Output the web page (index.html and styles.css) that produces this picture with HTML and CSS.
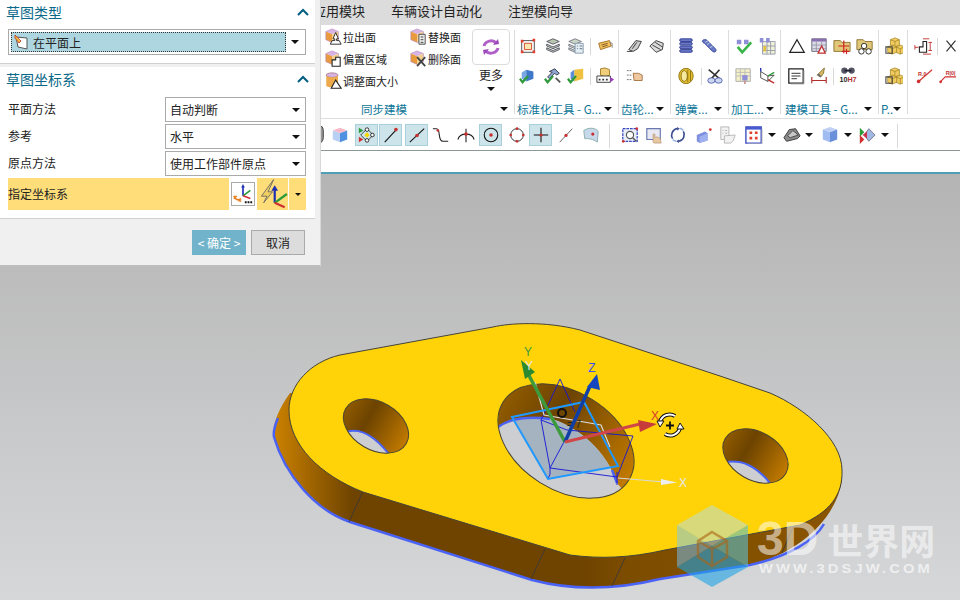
FILE: index.html
```html
<!DOCTYPE html>
<html lang="zh">
<head>
<meta charset="utf-8">
<title>草图</title>
<link rel="stylesheet" href="styles.css">
</head>
<body>
<svg class="defs" aria-hidden="true">
<defs>
<g id="cube"><path d="M9 1l7 3-7 3-7-3z" fill="#d8b4e4"/><path d="M2 4l7 3v9l-7-3z" fill="#e89a3c"/><path d="M9 7l7-3v9l-7 3z" fill="#f2cf8e"/><path d="M9 1l7 3v9l-7 3-7-3V4z" fill="none" stroke="#b78ac0" stroke-width=".7"/></g>
<symbol id="s1" viewBox="0 0 20 20"><use href="#cube"/><path d="M13 5l3 7h-2v2h3l2 4H7l2-4h3v-2h-2z" fill="#fff" stroke="#222" stroke-width="1"/></symbol>
<symbol id="s2" viewBox="0 0 20 20"><use href="#cube"/><path d="M9 11h4V8h5v10H9z" fill="#fff" stroke="#222" stroke-width="1.200"/></symbol>
<symbol id="s3" viewBox="0 0 20 20"><ellipse cx="9" cy="3.500" rx="6.500" ry="2.500" fill="#d8b4e4" stroke="#a78"/><path d="M2.500 3.500v12c1 2 12 2 13 0v-12c-1 3-12 3-13 0z" fill="#eda94a"/><path d="M13 9l6 9H8z" fill="#fff" stroke="#222" stroke-width="1.200"/></symbol>
<symbol id="s4" viewBox="0 0 20 20"><use href="#cube"/><path d="M11 7h7v11h-7z" fill="#eee" stroke="#444"/><path d="M13 10h3M13 13h3M13 16h3" stroke="#333"/></symbol>
<symbol id="s5" viewBox="0 0 20 20"><use href="#cube"/><path d="M9 8l9 10M18 8L9 18" stroke="#444" stroke-width="2"/></symbol>
<symbol id="swirl" viewBox="0 0 20 20"><path d="M3 9c1-5 9-7 12-3M17 11c-1 5-9 7-12 3" fill="none" stroke="#b060c8" stroke-width="3"/><path d="M12 8l6-1-1-5zM8 12l-6 1 1 5z" fill="#9a48b8"/></symbol>
<symbol id="a1" viewBox="0 0 20 20"><path d="M3 4h14v13H3z" fill="none" stroke="#444"/><path d="M6 7h8v7H6z" fill="#fbe8b0" stroke="#d04020"/><path d="M2 3h3v3H2zM15 2h3v3h-3zM2 15h3v3H2zM15 15h3v3h-3z" fill="#e04030"/></symbol>
<symbol id="a2" viewBox="0 0 20 20"><g fill="#b9c7b0" stroke="#556"><path d="M10 2l7 3-7 3-7-3z"/><path d="M3 8l7 3 7-3v2l-7 3-7-3z"/><path d="M3 12l7 3 7-3v2l-7 3-7-3z"/></g></symbol>
<symbol id="a3" viewBox="0 0 20 20"><g fill="#c9d6c5" stroke="#778"><path d="M9 2l7 3-7 3-7-3z"/><path d="M2 8l7 3 7-3v2l-7 3-7-3z"/><path d="M2 12l7 3 7-3v2l-7 3-7-3z"/></g><path d="M9 7h9v11H9z" fill="#e4eef5" stroke="#89a"/><path d="M11 10h1M14 10h3M11 13h1M14 13h3" stroke="#567"/></symbol>
<symbol id="a4" viewBox="0 0 20 20"><path d="M3 7l12-3 2 6-12 4z" fill="#f2c25c" stroke="#a06a20"/><path d="M6 9l7-2M7 11l6-2" stroke="#7a5020"/><path d="M15 6l3 1v5" fill="none" stroke="#888"/></symbol>
<g id="chk"><path d="M1 13l3 4 6-7" fill="none" stroke="#2f9a3a" stroke-width="2.500"/></g>
<symbol id="b1" viewBox="0 0 20 20"><path d="M8 3l8 2v8l-8 3z" fill="#3f78c8"/><path d="M8 3L3 6v7l5 3z" fill="#7aa8e0"/><use href="#chk"/></symbol>
<symbol id="b2" viewBox="0 0 20 20"><path d="M6 5l6-3 5 5-3 2-2-2-6 6-2-2 5-5z" fill="#8fa4d0" stroke="#334"/><use href="#chk"/><path d="M13 12l5 5" stroke="#555" stroke-width="2"/></symbol>
<symbol id="b3" viewBox="0 0 20 20"><path d="M8 3l10-1v11l-10 3z" fill="#f0c040"/><path d="M8 3L4 6v7l4 3z" fill="#5d8fd8"/><use href="#chk"/></symbol>
<symbol id="b4" viewBox="0 0 20 20"><path d="M5 2l5-1 5 2v6l-5 2-5-2z" fill="#efcf7c" stroke="#a07a20"/><path d="M1 10h15v7H1z" fill="#fff" stroke="#333"/><path d="M3 13h2v2H3zM7 13h2v2H7zM11 13h2v2h-2z" fill="#333"/><path d="M16 11l4 3-4 3z" fill="#a03ac0"/></symbol>
<symbol id="c1" viewBox="0 0 20 20"><path d="M3 14L11 4l6 1-4 8-5 3z" fill="#ccc" stroke="#333"/><path d="M7 13l5-7M1 16h6" stroke="#333"/></symbol>
<symbol id="c2" viewBox="0 0 20 20"><path d="M2 10l7-6 8 3-1 7-7 3z" fill="#dcdcdc" stroke="#333"/><path d="M5 9l9 5M8 6l8 5" stroke="#333"/></symbol>
<symbol id="c3" viewBox="0 0 20 20"><path d="M1 4h6M1 9h6M1 14h6" stroke="#666" stroke-dasharray="2 1"/><path d="M8 7h6l4 2v6h-9z" fill="#f0c8a0" stroke="#a07040"/></symbol>
<symbol id="d1" viewBox="0 0 20 20"><g fill="#6a78c8" stroke="#303c90"><rect x="3" y="2" width="14" height="3" rx="1.500"/><rect x="3" y="6" width="14" height="3" rx="1.500"/><rect x="3" y="10" width="14" height="3" rx="1.500"/><rect x="3" y="14" width="14" height="3" rx="1.500"/></g></symbol>
<symbol id="d2" viewBox="0 0 20 20"><path d="M5 3c-3 0-3 3 0 4l9 9c3 2 5-1 3-3L7 3z" fill="#6a78c8" stroke="#303c90"/><path d="M6 6l3-2M8 9l3-3M11 12l3-2" stroke="#cdd"/></symbol>
<symbol id="d3" viewBox="0 0 20 20"><ellipse cx="10" cy="10" rx="8" ry="8.500" fill="#e6c030" stroke="#8a7010"/><ellipse cx="8" cy="10" rx="3.500" ry="6" fill="#f7e8a0" stroke="#8a7010"/><path d="M12 3v14M15 4v12" stroke="#8a7010"/></symbol>
<symbol id="d4" viewBox="0 0 20 20"><path d="M3 3l12 10M15 3L5 14" stroke="#333" stroke-width="1.800"/><ellipse cx="6" cy="15" rx="4" ry="3" fill="#cfd6f0" stroke="#5060b0"/><ellipse cx="14" cy="15" rx="4" ry="3" fill="#cfd6f0" stroke="#5060b0"/></symbol>
<symbol id="e1" viewBox="0 0 20 20"><path d="M2 3h5v5H2zM10 3h5v5h-5z" fill="#8f8fd8"/><path d="M3 11l5 6 10-11" fill="none" stroke="#39b54a" stroke-width="3"/></symbol>
<symbol id="e2" viewBox="0 0 20 20"><path d="M5 5h14v14H5z" fill="#eef2d8" stroke="#99a"/><path d="M5 10h14M5 15h14M10 5v14M14 5v14" stroke="#99a"/><path d="M2 1h4v5H2zM9 1h4v5H9z" fill="#8f8fd8"/><path d="M6 10h3v6H6z" fill="#e0c040"/></symbol>
<symbol id="e3" viewBox="0 0 20 20"><path d="M1 2h16v14H1z" fill="#f4f0c8" stroke="#aaa"/><path d="M1 6h16M1 10h16M6 2v14M11 2v14" stroke="#bbb"/><path d="M8 9h6v6H8z" fill="#8f8fd8"/><path d="M11 15v4" stroke="#c99" stroke-width="2"/></symbol>
<symbol id="e4" viewBox="0 0 20 20"><path d="M3 5l8 5v6l-8-4zM11 10l7-1-7 7" fill="#fff" stroke="#444"/><path d="M3 5V1" stroke="#2030b0" stroke-width="1.500"/><path d="M11 10l7-4" stroke="#2a9a3a" stroke-width="1.500"/><path d="M11 14l7 4" stroke="#c03030" stroke-width="1.500"/></symbol>
<symbol id="f1" viewBox="0 0 20 20"><path d="M10 3l8 14H2z" fill="none" stroke="#222" stroke-width="1.400"/></symbol>
<symbol id="f2" viewBox="0 0 20 20"><path d="M2 2h16v14H2z" fill="#dcdce8" stroke="#667"/><path d="M2 2h16v3H2z" fill="#8a6fb0"/><path d="M2 9h16M2 13h16M7 5v11M13 5v11" stroke="#99a"/><path d="M13 10l4 8H9z" fill="#fff" stroke="#c03030" stroke-width="1.400"/></symbol>
<symbol id="f3" viewBox="0 0 20 20"><path d="M1 4h7l2 2h9v10H1z" fill="#e0c878" stroke="#8a7030"/><path d="M12 4v14M6 10h12M15 13v6M10 16h8" stroke="#d02020" stroke-width="1.300"/></symbol>
<symbol id="f4" viewBox="0 0 20 20"><path d="M1 3h7l2 2h8v9H1z" fill="#e0c878" stroke="#8a7030"/><circle cx="9" cy="10" r="3" fill="#fff" stroke="#222"/><circle cx="6" cy="16" r="3" fill="#fff" stroke="#222"/><circle cx="14" cy="16" r="3" fill="#fff" stroke="#222"/></symbol>
<symbol id="f5" viewBox="0 0 20 20"><path d="M2 2h16v16H2z" fill="#fff" stroke="#222" stroke-width="1.400"/><path d="M5 7h10M5 10h10M5 13h6" stroke="#222"/><path d="M19 4v15H4" fill="none" stroke="#bbb"/></symbol>
<symbol id="f6" viewBox="0 0 20 20"><path d="M2 11v7M18 11v7M2 15h16" stroke="#b03030" stroke-width="1.300"/><path d="M8 9l8-8-1 6-3 4z" fill="#d8b860" stroke="#807030"/><path d="M9 8l3 3" stroke="#667" stroke-width="2"/></symbol>
<symbol id="f7" viewBox="0 0 20 20"><circle cx="6" cy="4" r="3.500" fill="#556"/><circle cx="14" cy="4" r="3.500" fill="#556"/><path d="M6 4h8" stroke="#223" stroke-width="2"/><text x="10" y="17" class="t7">10<tspan class="t7r">H7</tspan></text></symbol>
<g id="box"><path d="M8 1l5 2v6l-5 2-5-2V3z" fill="#f0cc60" stroke="#a08020" stroke-width=".8"/><path d="M3 3l5 2 5-2M8 5v6" fill="none" stroke="#a08020" stroke-width=".8"/></g>
<symbol id="g1" viewBox="0 0 20 20"><use href="#box" x="3"/><use href="#box" x="9" y="8"/><use href="#box" x="0" y="8"/><path d="M1 11h7v7H1z" fill="none" stroke="#444" stroke-width="1.200"/></symbol>
<symbol id="h1" viewBox="0 0 20 20"><path d="M6 17V11h4V5h4v12z" fill="#fff" stroke="#222" stroke-width="1.200"/><path d="M1 9v5M1 11.500h4M10 2h7M10 19h9M18 6v9M16 6h4M16 15h4" stroke="#c03030"/></symbol>
<symbol id="h2" viewBox="0 0 20 20"><path d="M3 17L19 3" stroke="#d03030" stroke-width="1.300"/><circle cx="4" cy="16" r="2" fill="#d03030"/><text x="8" y="10" class="tr">R.0</text></symbol>
<symbol id="h3" viewBox="0 0 20 20"><path d="M2 17l6-6h12" fill="none" stroke="#d03030" stroke-width="1.200"/><circle cx="3" cy="16.500" r="1.500" fill="#d03030"/><text x="14" y="9" class="tr">R|0|</text></symbol>
<symbol id="x" viewBox="0 0 20 20"><path d="M5 4l10 12M15 4L5 16" stroke="#333" stroke-width="1.300"/></symbol>
<symbol id="t0" viewBox="0 0 20 20"><path d="M3 5a6 6 0 0 1 14 0v8a6 6 0 0 1-14 0z" fill="#999" stroke="#333"/></symbol>
<symbol id="t1" viewBox="0 0 20 20"><path d="M10 2l8 3-8 3-8-3z" fill="#f4b8c8"/><path d="M2 5l8 3v10l-8-3z" fill="#b8d0f4"/><path d="M10 8l8-3v10l-8 3z" fill="#5090e0"/></symbol>
<symbol id="t2" viewBox="0 0 20 20"><path d="M10 3l7 7-7 7-7-7z" fill="none" stroke="#333"/><path d="M10 7l3 3-3 3-3-3z" fill="#f7d700"/><circle cx="10" cy="4" r="2" fill="#fff" stroke="#222"/><circle cx="10" cy="16" r="2" fill="#fff" stroke="#222"/><circle cx="16" cy="10" r="2" fill="#fff" stroke="#222"/><path d="M1 2l5 3-5 3z" fill="#2a9a3a"/><path d="M1 12l5 3-5 3z" fill="#d03030"/></symbol>
<symbol id="t3" viewBox="0 0 20 20"><path d="M3 18L16 4" stroke="#111" stroke-width="1.200"/><circle cx="15.500" cy="4" r="2" fill="#c83030"/></symbol>
<symbol id="t4" viewBox="0 0 20 20"><path d="M2 18L18 3" stroke="#111" stroke-width="1.200"/><circle cx="10" cy="10.500" r="2" fill="#c83030"/></symbol>
<symbol id="t5" viewBox="0 0 20 20"><path d="M1 3h4c5 0 1 14 7 14h6" fill="none" stroke="#222" stroke-width="1.200"/><circle cx="6.500" cy="5" r="1.500" fill="#c83030"/></symbol>
<symbol id="t6" viewBox="0 0 20 20"><path d="M1 15c2-8 16-8 18 0M10 3v15" fill="none" stroke="#222" stroke-width="1.200"/><circle cx="10" cy="9" r="2" fill="#c83030"/></symbol>
<symbol id="t7" viewBox="0 0 20 20"><circle cx="10" cy="10" r="7.500" fill="none" stroke="#111" stroke-width="1.200"/><circle cx="10" cy="10" r="2" fill="#c83030"/></symbol>
<symbol id="t8" viewBox="0 0 20 20"><circle cx="10" cy="10" r="7" fill="none" stroke="#333" stroke-width="1.100"/><g fill="#c83030"><circle cx="10" cy="3" r="1.500"/><circle cx="10" cy="17" r="1.500"/><circle cx="3" cy="10" r="1.500"/><circle cx="17" cy="10" r="1.500"/></g></symbol>
<symbol id="t9" viewBox="0 0 20 20"><path d="M10 2v16M2 10h16" stroke="#111" stroke-width="1.200"/><circle cx="10" cy="10" r="1.800" fill="#c83030"/></symbol>
<symbol id="t10" viewBox="0 0 20 20"><path d="M3 18L17 3" stroke="#555" stroke-width="1"/><circle cx="10" cy="10.500" r="1.800" fill="#c83030"/></symbol>
<symbol id="t11" viewBox="0 0 20 20"><path d="M2 5c6-4 13-3 16 1l-1 12c-5-4-10-4-14-4z" fill="#c6d8ea" stroke="#8aa"/><circle cx="12" cy="9" r="1.800" fill="#c83030"/></symbol>
<symbol id="t12" viewBox="0 0 20 20"><path d="M2 3h16v14H2z" fill="#e9eef8" stroke="#3a4ac0" stroke-width="1.400" stroke-dasharray="3 1"/><circle cx="10" cy="10" r="4" fill="#fff" stroke="#555" stroke-width="1.300"/><path d="M13 13l4 4" stroke="#555" stroke-width="1.500"/><circle cx="2.500" cy="17" r="1.500" fill="#d03030"/><circle cx="17.500" cy="3" r="1.500" fill="#d03030"/></symbol>
<symbol id="t13" viewBox="0 0 20 20"><path d="M2 3h15v12H2z" fill="#e9e9f4" stroke="#6a7ab0" stroke-width="1.300"/><path d="M9 18V9h2v4l2-1 4 2 1 5H10z" fill="#e8c8a0" stroke="#b09070" stroke-width=".7"/></symbol>
<symbol id="t14" viewBox="0 0 20 20"><path d="M4 14A7.500 7.500 0 0 1 9 2.800M16 6a7.500 7.500 0 0 1-5 11" fill="none" stroke="#3a4a90" stroke-width="1.800"/><path d="M9 1l3 2-3 2zM11 15l-3 2 3 2z" fill="#3a4a90"/><path d="M16 5a8 8 0 0 0-4-2.500M4 15a8 8 0 0 0 4 2" stroke="#8fb0e0" fill="none" stroke-width="1.500"/></symbol>
<symbol id="t15" viewBox="0 0 20 20"><path d="M2 10l9-4 3 2v8l-9 3-3-2z" fill="#7f90e0"/><path d="M5 12l9-4v8l-9 3z" fill="#9fb0ef"/><circle cx="17" cy="4" r="1.500" fill="#d03030"/></symbol>
<symbol id="t16" viewBox="0 0 20 20"><g fill="#f2f2f2" stroke="#b4b4b4"><path d="M2 1h9v14H2z"/><path d="M6 11l12-1-2 6-3 3H6z"/></g><path d="M4 5h1M7 5h2M4 8h1M7 8h2" stroke="#aaa"/></symbol>
<symbol id="t17" viewBox="0 0 20 20"><path d="M1 1h17v18H1z" fill="#fff" stroke="#3a4ac0" stroke-width="1.500"/><path d="M1 1h17v3H1z" fill="#4a5ad0"/><path d="M5 6h3v3H5zM11 6h3v3h-3zM5 12h3v3H5zM11 12h3v3h-3z" fill="#e04030"/><path d="M19 3v17H3" fill="none" stroke="#bbb"/></symbol>
<symbol id="t18" viewBox="0 0 20 20"><path d="M1 13l6-9 7-1 5 8-3 3-12 3z" fill="#8a8a8a" stroke="#333"/><path d="M5 11l6-6 6 5-9 3z" fill="#c8c8c8" stroke="#444"/></symbol>
<symbol id="t19" viewBox="0 0 20 20"><path d="M10 1l8 3-8 3-8-3z" fill="#bfd0f4"/><path d="M2 4l8 3v11l-8-3z" fill="#a0bcf0"/><path d="M10 7l8-3v11l-8 3z" fill="#6a90dc"/></symbol>
<symbol id="t20" viewBox="0 0 20 20"><path d="M2 2l5 5-5 5z" fill="#2a9a3a"/><path d="M2 10l5 5-5 5z" fill="#d03030"/><path d="M12 3l7 7-7 7-5-7z" fill="#9fb8e6" stroke="#778"/><path d="M5 10l5-4v8z" fill="#d03050"/></symbol>
<symbol id="pln" viewBox="0 0 16 16"><path d="M2 3l11 1v11L4 13z" fill="#fff" stroke="#555"/><path d="M1 1l6 6-2 2-4-5z" fill="#f0c040" stroke="#c03020" stroke-width=".8"/></symbol>
<symbol id="cs" viewBox="0 0 24 24"><path d="M12 14V4" stroke="#1e30b0" stroke-width="1.800"/><path d="M12 14l8-6" stroke="#2a9a3a" stroke-width="1.800"/><path d="M12 14l8 3" stroke="#d03030" stroke-width="1.800"/><path d="M10 5l2-4 2 4z" fill="#1e30b0"/><path d="M2 14c2 5 5 5 8 3M2 17l3-3M7 19l3 1" fill="none" stroke="#e88020" stroke-width="1.800"/><path d="M14 20h2v2h-2zM17 20h2v2h-2zM20 20h2v2h-2z" fill="#111"/></symbol>
<symbol id="csz" viewBox="0 0 28 28"><path d="M15 1L4 16l5 0-3 6 8-10h-4z" fill="#f0d060" stroke="#666" stroke-width=".8"/><path d="M16 22V9" stroke="#1e30b0" stroke-width="2"/><path d="M13 11l3-5 3 5z" fill="#1e30b0"/><path d="M16 22l11-8" stroke="#2a9a3a" stroke-width="2"/><path d="M16 22l9 4" stroke="#d03030" stroke-width="2"/></symbol>
</defs>
</svg>

<div class="app">
  <nav class="menu">
    <span>应用模块</span><span>车辆设计自动化</span><span>注塑模向导</span>
  </nav>

  <section class="ribbon">
    <div class="grp g1">
      <div class="sync">
        <div class="scol c-a">
          <div class="item"><svg class="ic"><use href="#s1"/></svg>拉出面</div>
          <div class="item"><svg class="ic"><use href="#s2"/></svg>偏置区域</div>
          <div class="item"><svg class="ic"><use href="#s3"/></svg>调整面大小</div>
        </div>
        <div class="scol c-b">
          <div class="item"><svg class="ic"><use href="#s4"/></svg>替换面</div>
          <div class="item"><svg class="ic"><use href="#s5"/></svg>删除面</div>
        </div>
        <div class="more">
          <div class="morebtn"><svg class="ic"><use href="#swirl"/></svg></div>
          <span>更多</span>
          <i class="tri"></i>
        </div>
      </div>
      <div class="lab lab-center"><span>同步建模</span><i class="tri"></i></div>
    </div>

    <div class="grp g2">
      <div class="tools">
        <div class="row"><svg class="ic m3"><use href="#a1"/></svg><svg class="ic m5"><use href="#a2"/></svg><svg class="ic m3"><use href="#a3"/></svg><i class="sep m4"></i><svg class="ic m4"><use href="#a4"/></svg></div>
        <div class="row"><svg class="ic m3"><use href="#b1"/></svg><svg class="ic m5"><use href="#b2"/></svg><svg class="ic m3"><use href="#b3"/></svg><i class="sep m4"></i><svg class="ic m4"><use href="#b4"/></svg></div>
      </div>
      <div class="lab"><span>标准化工具 - G...</span><i class="tri"></i></div>
    </div>

    <div class="grp g3">
      <div class="tools">
        <div class="row"><svg class="ic m6"><use href="#c1"/></svg><svg class="ic m2"><use href="#c2"/></svg></div>
        <div class="row"><svg class="ic m6"><use href="#c3"/></svg></div>
      </div>
      <div class="lab"><span>齿轮...</span><i class="tri"></i></div>
    </div>

    <div class="grp g4">
      <div class="tools">
        <div class="row"><svg class="ic m5"><use href="#d1"/></svg><svg class="ic m3"><use href="#d2"/></svg></div>
        <div class="row"><svg class="ic m5"><use href="#d3"/></svg><i class="sep m5"></i><svg class="ic m3"><use href="#d4"/></svg></div>
      </div>
      <div class="lab lab-in"><span>弹簧...</span><i class="tri"></i></div>
    </div>

    <div class="grp g5">
      <div class="tools">
        <div class="row"><svg class="ic m5"><use href="#e1"/></svg><svg class="ic m3"><use href="#e2"/></svg></div>
        <div class="row"><svg class="ic m5"><use href="#e3"/></svg><svg class="ic m3"><use href="#e4"/></svg></div>
      </div>
      <div class="lab"><span>加工...</span><i class="tri"></i></div>
    </div>

    <div class="grp g6">
      <div class="tools">
        <div class="row"><svg class="ic m6"><use href="#f1"/></svg><svg class="ic m2"><use href="#f2"/></svg><svg class="ic m3"><use href="#f3"/></svg><svg class="ic m3"><use href="#f4"/></svg></div>
        <div class="row"><svg class="ic m5"><use href="#f5"/></svg><svg class="ic m3"><use href="#f6"/></svg><i class="sep m4"></i><svg class="ic m4"><use href="#f7"/></svg></div>
      </div>
      <div class="lab lab-in"><span>建模工具 - G...</span><i class="tri"></i></div>
    </div>

    <div class="grp g7">
      <div class="tools">
        <div class="row"><svg class="ic m5"><use href="#g1"/></svg></div>
        <div class="row"><svg class="ic m5"><use href="#g1"/></svg></div>
      </div>
      <div class="lab"><span>P..</span><i class="tri"></i></div>
    </div>

    <div class="grp g8">
      <div class="tools">
        <div class="row"><svg class="ic m5"><use href="#h1"/></svg><i class="sep m4"></i><svg class="ic m3"><use href="#x"/></svg></div>
        <div class="row"><svg class="ic m6"><use href="#h2"/></svg><svg class="ic m3"><use href="#h3"/></svg></div>
      </div>
    </div>
  </section>

  <section class="toolbar">
    <div class="t"><svg class="ic"><use href="#t0"/></svg></div>
    <div class="t"><svg class="ic"><use href="#t1"/></svg></div>
    <div class="t on m4"><svg class="ic"><use href="#t2"/></svg></div>
    <div class="t on m1"><svg class="ic"><use href="#t3"/></svg></div>
    <div class="t on m3"><svg class="ic"><use href="#t4"/></svg></div>
    <div class="t m1"><svg class="ic"><use href="#t5"/></svg></div>
    <div class="t m2"><svg class="ic"><use href="#t6"/></svg></div>
    <div class="t on m2"><svg class="ic"><use href="#t7"/></svg></div>
    <div class="t m3"><svg class="ic"><use href="#t8"/></svg></div>
    <div class="t on m1"><svg class="ic"><use href="#t9"/></svg></div>
    <div class="t m2"><svg class="ic"><use href="#t10"/></svg></div>
    <div class="t m2"><svg class="ic"><use href="#t11"/></svg></div>
    <i class="tsep m7"></i>
    <div class="t m8"><svg class="ic"><use href="#t12"/></svg></div>
    <div class="t m1"><svg class="ic"><use href="#t13"/></svg></div>
    <div class="t m1"><svg class="ic"><use href="#t14"/></svg></div>
    <div class="t m3"><svg class="ic"><use href="#t15"/></svg></div>
    <div class="t m1"><svg class="ic"><use href="#t16"/></svg></div>
    <div class="t m3"><svg class="ic"><use href="#t17"/></svg></div>
    <i class="tri tb m3"></i>
    <div class="t m4"><svg class="ic"><use href="#t18"/></svg></div>
    <i class="tri tb m2"></i>
    <div class="t m5"><svg class="ic"><use href="#t19"/></svg></div>
    <i class="tri tb m3"></i>
    <div class="t m3"><svg class="ic"><use href="#t20"/></svg></div>
    <i class="tri tb m3"></i>
    <i class="tsep m8"></i>
  </section>

  <div class="tabstrip"></div>

  <main class="viewport">
    <svg class="scene" viewBox="0 174 960 426">
      <defs>
        <linearGradient id="sideGrad" gradientUnits="userSpaceOnUse" x1="273" y1="0" x2="840" y2="0">
          <stop offset="0" stop-color="#cc8200"/><stop offset=".14" stop-color="#6f4400"/><stop offset=".55" stop-color="#6f4400"/><stop offset=".62" stop-color="#7c4c00"/><stop offset="1" stop-color="#8a5500"/>
        </linearGradient>
        <linearGradient id="wall" x1="0" y1="0" x2="1" y2="0">
          <stop offset="0" stop-color="#8f5a00"/><stop offset=".35" stop-color="#6c4300"/><stop offset="1" stop-color="#c27a00"/>
        </linearGradient>
        <clipPath id="h1clip"><ellipse cx="376" cy="426" rx="35" ry="24" transform="rotate(30 376 426)"/></clipPath>
        <clipPath id="h2clip"><ellipse cx="755.500" cy="456" rx="35" ry="24" transform="rotate(30 755.500 456)"/></clipPath>
        <clipPath id="h3clip"><ellipse cx="566" cy="441" rx="74" ry="49" transform="rotate(32 566 441)"/></clipPath>
        <clipPath id="floorclip"><path d="M498 427C510 418 535 415 552 419C580 428 607 452 617 483L640 500H490Z"/></clipPath>
      </defs>
      <path class="side" d="M290 393C278 410 272 425 274 437C285 475 315 510 350 522L532 580C570 590 615 590 660 579L750 565C790 556 835 525 842 480L700 400Z"/>
      <path class="edgeb" d="M278 418C275 425 273 431 274 437C285 475 315 510 350 522L532 580C570 590 615 590 660 579L750 565C790 556 815 540 824 524"/>
      <path class="facet" d="M363 491L349 522M545 549L531 579M625 558L612 586M793 527L782 553"/>
      <path class="top" d="M340 355L493 327C510 323 545 321 580 330L720 376L770 393C805 408 842 440 842 470C843 495 830 512 800 525L665 550C630 558 600 559 570 555L363 492C320 475 289 445 289 410C289 385 310 362 340 355Z"/>

      <ellipse class="holewall" cx="376" cy="426" rx="35" ry="24" transform="rotate(30 376 426)"/>
      <g clip-path="url(#h1clip)"><path class="floor fb" d="M346 432C358 428 372 433 388 453L360 470L330 450Z"/></g>
      <ellipse class="holerim" cx="376" cy="426" rx="35" ry="24" transform="rotate(30 376 426)"/>

      <ellipse class="holewall" cx="755.500" cy="456" rx="35" ry="24" transform="rotate(30 755.500 456)"/>
      <g clip-path="url(#h2clip)"><path class="floor fb" d="M726 462C742 460 755 465 770 483L745 495L715 475Z"/></g>
      <ellipse class="holerim" cx="755.500" cy="456" rx="35" ry="24" transform="rotate(30 755.500 456)"/>

      <ellipse class="holewall" cx="566" cy="441" rx="74" ry="49" transform="rotate(32 566 441)"/>
      <g clip-path="url(#h3clip)">
        <path class="floor" d="M498 427C510 418 535 415 552 419C580 428 607 452 617 483L640 510H480Z"/>
        <g clip-path="url(#floorclip)"><path class="tint" d="M512 417L584 402L618 466L548 479Z"/></g>
        <path class="fedge" d="M498 427C510 418 530 416 550 419"/>
        <path class="fedge" d="M612 470L617 483"/>
      </g>
      <ellipse class="holerim" cx="566" cy="441" rx="74" ry="49" transform="rotate(32 566 441)"/>

      <path class="thin" d="M560 379L541 420L550 468L617 477L633 436L567 430L541 420M560 379L575 412M580 412L550 468M550 468L550 474L548 479M617 472L617 485"/>
      <path class="whiteln" d="M535 382L544 415L601 425L610 447M618 478L664 482"/>
      <path class="whitetip" d="M661 479L677 482.500L661 485Z"/>
      <path class="plane" d="M512 417L584 402L618 466L548 479Z"/>
      <circle class="ring" cx="562" cy="413" r="4"/>
      <text x="567" y="428" class="dim">= 7</text>

      <path class="ay" d="M565 442L527 372"/>
      <path class="ayh" d="M521 360L535 372L525 379Z"/>
      <path class="az" d="M565 442L590 386"/>
      <path class="azh" d="M597 374L600 390L587 387Z"/>
      <path class="ax" d="M565 442L640 424"/>
      <path class="axh" d="M657 424L638 420L640 432Z"/>
      <text x="528" y="356" class="lbl ly">Y</text>
      <text x="529" y="370" class="lbl lw">Y</text>
      <text x="592" y="372" class="lbl lz">Z</text>
      <text x="655" y="420" class="lbl lx">X</text>
      <text x="683" y="487" class="lbl lw">X</text>

      <g class="rot">
        <path class="rotb" d="M660 422A10 10 0 0 1 675 416M680 428A10 10 0 0 1 665 434"/>
        <path class="rotw" d="M660 422A10 10 0 0 1 675 416M680 428A10 10 0 0 1 665 434"/>
        <path class="rotf" d="M657 421L664 421L660 427ZM677 429L684 429L680 423Z"/>
        <path class="plus" d="M666 425.500H674M670 421.500V429.500"/>
      </g>

      <g class="wm">
        <path class="wm-top" d="M712 505L748 525L712 546L677 525Z"/>
        <path class="wm-right" d="M748 525V567L712 546Z"/>
        <path class="wm-left" d="M677 525L712 546L677 567Z"/>
        <path class="wm-bottom" d="M677 567L712 546L748 567L712 587Z"/>
        <path class="wm-cube" d="M712 532L727 541V557L712 566L698 557V541ZM698 541L712 549L727 541M712 549V566"/>
        <text x="757" y="555" class="wm-t1"><tspan class="wm-en">3D</tspan><tspan dx="9">世界网</tspan></text>
        <text x="759" y="573" class="wm-t2" textLength="174" lengthAdjust="spacingAndGlyphs">WWW.3DSJW.COM</text>
      </g>
    </svg>
  </main>

  <aside class="dialog">
    <div class="sec s-type">
      <div class="sec-head"><span>草图类型</span><svg class="chev" viewBox="0 0 12 8"><path d="M1 7l5-5 5 5"/></svg></div>
      <div class="sel sel-type">
        <div class="sel-val"><svg class="pln"><use href="#pln"/></svg>在平面上</div>
        <i class="tri"></i>
      </div>
    </div>
    <div class="sec s-csys">
      <div class="sec-head"><span>草图坐标系</span><svg class="chev" viewBox="0 0 12 8"><path d="M1 7l5-5 5 5"/></svg></div>
      <div class="form">
        <div class="frow"><label>平面方法</label><div class="sel"><span>自动判断</span><i class="tri"></i></div></div>
        <div class="frow"><label>参考</label><div class="sel"><span>水平</span><i class="tri"></i></div></div>
        <div class="frow"><label>原点方法</label><div class="sel"><span>使用工作部件原点</span><i class="tri"></i></div></div>
        <div class="frow pick">
          <div class="pick-lab">指定坐标系</div>
          <div class="pick-btn"><svg class="cs"><use href="#cs"/></svg></div>
          <div class="pick-split">
            <svg class="csz"><use href="#csz"/></svg>
            <span class="pick-arrow"><i class="tri tri-sm"></i></span>
          </div>
        </div>
      </div>
    </div>
    <div class="foot">
      <button class="btn ok">&lt;&nbsp;确定&nbsp;&gt;</button>
      <button class="btn cancel">取消</button>
    </div>
  </aside>
</div>
</body>
</html>
```

FILE: styles.css
```css
html, body { margin: 0; padding: 0; }
body { font-family: "Noto Sans CJK SC", "Liberation Sans", sans-serif; background: #fff; color: #222; }
.defs { position: absolute; width: 0; height: 0; }
.app { position: relative; width: 960px; height: 600px; overflow: hidden; display: flex; flex-direction: column; }

.m1 { margin-left: 1px; } .m2 { margin-left: 2px; } .m3 { margin-left: 3px; }
.m4 { margin-left: 4px; } .m5 { margin-left: 5px; } .m6 { margin-left: 6px; }
.m7 { margin-left: 7px; } .m8 { margin-left: 8px; }

.tri { display: block; width: 0; height: 0; border-left: 4px solid transparent; border-right: 4px solid transparent; border-top: 4px solid #111; flex: none; }
.ic { width: 20px; height: 20px; display: block; flex: none; box-sizing: border-box; }
.row .ic, .t .ic { padding: 1px; }

.menu { height: 25px; flex: none; background: #dcdcdc; padding-left: 313px; display: flex; gap: 26px; align-items: center; font-size: 13px; line-height: 22px; color: #222; box-sizing: border-box; padding-bottom: 3px; }

.ribbon { height: 94px; flex: none; display: flex; box-sizing: border-box; padding: 5px 0 4px 320px; border-bottom: 1px solid #dedede; background: #fff; }
.grp { box-sizing: border-box; border-right: 1px solid #dcdcdc; display: flex; flex-direction: column; justify-content: space-between; }
.g1 { width: 195px; } .g2 { width: 104px; } .g3 { width: 52px; } .g4 { width: 58px; }
.g5 { width: 52px; } .g6 { width: 98px; } .g7 { width: 29px; } .g8 { width: 52px; border-right: 0; }

.tools { display: flex; flex-direction: column; margin-top: 1px; }
.row { display: flex; align-items: center; height: 30px; }
.sep { display: block; width: 1px; height: 17px; background: #d8d8d8; flex: none; }

.lab { display: flex; justify-content: space-between; align-items: center; height: 14px; margin-bottom: -2px; padding: 0 6px 0 2px; font-size: 11.500px; line-height: 14px; color: #0b7497; white-space: nowrap; }
.lab-center { padding-left: 41px; }
.lab-in { padding-left: 4px; }

.sync { display: flex; margin-top: -4px; }
.scol { display: flex; flex-direction: column; }
.c-a { width: 88px; padding-left: 3px; box-sizing: border-box; }
.c-b { width: 64px; }
.item { display: flex; align-items: center; height: 22px; font-size: 11px; color: #222; white-space: nowrap; }
.item .ic { padding: 1px; }
.more { width: 38px; display: flex; flex-direction: column; align-items: center; margin-top: 3px; font-size: 12px; color: #222; }
.morebtn { width: 38px; height: 36px; border: 1px solid #dcdcdc; border-radius: 4px; box-sizing: border-box; display: flex; align-items: center; justify-content: center; background: #fff; }
.more span { line-height: 16px; margin-top: 2px; }
.more .tri { margin-top: 4px; }

.toolbar { height: 32px; flex: none; display: flex; align-items: flex-start; box-sizing: border-box; padding: 5px 0 0 305px; border-bottom: 1px solid #8c9797; background: #fff; }
.t { width: 23px; height: 22px; box-sizing: border-box; display: flex; align-items: center; justify-content: center; flex: none; }
.t.on { background: #cce4ea; border: 1px solid #a8d0da; }
.tsep { display: block; width: 1px; height: 24px; background: #d8d8d8; flex: none; }
.tb { margin-top: 9px; }

.tabstrip { flex: none; background: #fff; border-bottom: 2px solid #4f9fb6; height: 21px; }

.viewport { flex: 1; min-height: 0; background: linear-gradient(#b4b4b4, #d6d7d9); }
.scene { display: block; width: 960px; height: 426px; }

.side { fill: url(#sideGrad); }
.edgeb { fill: none; stroke: #4a62f5; stroke-width: 2.500; }
.facet { fill: none; stroke: #33363f; stroke-width: .8; }
.top { fill: #ffd307; stroke: #45433a; stroke-width: 1; }
.holewall { fill: url(#wall); }
.holerim { fill: none; stroke: #4a4433; stroke-width: 1; }
.floor { fill: #ccced1; }
.fb { stroke: #4a62f5; stroke-width: 2; }
.fedge { fill: none; stroke: #4a62f5; stroke-width: 2.500; }
.tint { fill: #a4b3bf; }
.thin { fill: none; stroke: #1414d8; stroke-width: .9; }
.plane { fill: none; stroke: #1f98ff; stroke-width: 2; }
.whiteln { fill: none; stroke: #dadada; stroke-width: 1.200; }
.whitetip { fill: #eee; }
.ring { fill: none; stroke: #111; stroke-width: 2; }
.dim { font: 10px "Liberation Sans", sans-serif; fill: #222; }
.ay { stroke: #3d9a3c; stroke-width: 3.500; }
.ayh { fill: #2a8a30; }
.az { stroke: #103fa8; stroke-width: 3.500; }
.azh { fill: #1446c0; }
.ax { stroke: #d14747; stroke-width: 3; }
.axh { fill: #c83b3b; }
.lbl { font: 12px "Liberation Sans", sans-serif; text-anchor: middle; }
.ly { fill: #3d9a3c; } .lz { fill: #3a50f0; } .lx { fill: #d84030; } .lw { fill: #e8e8e8; }
.rotb { fill: none; stroke: #111; stroke-width: 4; }
.rotw { fill: none; stroke: #fff; stroke-width: 2; }
.rotf { fill: #fff; stroke: #111; stroke-width: 1; }
.plus { fill: none; stroke: #111; stroke-width: 1.800; }

.wm-top { fill: rgba(177, 223, 237, .5); }
.wm-right { fill: rgba(90, 192, 205, .6); }
.wm-left { fill: rgba(115, 197, 255, .5); }
.wm-bottom { fill: rgba(30, 163, 230, .6); }
.wm-cube { fill: none; stroke: rgba(170, 100, 20, .6); stroke-width: 2.500; }
.wm-t1 { font: 700 36px "Noto Sans CJK SC", "Liberation Sans", sans-serif; fill: rgba(255, 255, 255, .55); }
.wm-en { font: 700 48px "Liberation Sans", sans-serif; }
.wm-t2 { font: 700 12px "Liberation Sans", sans-serif; letter-spacing: 2.500px; fill: rgba(255, 255, 255, .65); }

.t7 { font: 700 8px "Liberation Sans", sans-serif; text-anchor: middle; fill: #222; }
.t7r { fill: #b03030; }
.tr { font: 700 6px "Liberation Sans", sans-serif; text-anchor: middle; fill: #c03030; }

.dialog { position: absolute; left: 0; top: 0; width: 321px; height: 267px; box-sizing: border-box; background: #f0f0f0; border-right: 1px solid #d8d8d8; border-bottom: 2px solid #bdbdbd; }
.sec { width: 315px; background: #fff; box-sizing: border-box; border-bottom: 1px solid #d0d0d0; }
.s-type { height: 64px; margin-bottom: 3px; }
.s-csys { height: 152px; }
.sec-head { display: flex; justify-content: space-between; align-items: center; padding: 0 6px; font-size: 14px; color: #0a6888; }
.sec-head span { line-height: 20px; }
.s-type .sec-head { height: 24px; }
.s-csys .sec-head { height: 27px; padding-bottom: 3px; box-sizing: border-box; }
.chev { width: 12px; height: 8px; display: block; }
.chev path { fill: none; stroke: #005f80; stroke-width: 2; }

.sel { box-sizing: border-box; height: 25px; width: 141px; border: 1px solid #aaa; background: #fff; display: flex; align-items: center; justify-content: space-between; padding: 0 5px 0 4px; font-size: 12px; color: #222; white-space: nowrap; }
.sel-type { width: 298px; height: 26px; margin: 5px 0 0 8px; padding: 0 6px 0 2px; }
.sel-val { width: 275px; height: 20px; box-sizing: border-box; background: #aed6e1; border: 1px dotted #333; display: flex; align-items: center; gap: 3px; padding-left: 2px; }
.pln { width: 16px; height: 16px; display: block; flex: none; }

.form { display: flex; flex-direction: column; gap: 2px; padding: 3px 9px 0 8px; }
.frow { display: flex; justify-content: space-between; align-items: center; font-size: 12px; height: 25px; }
.frow label { color: #222; margin-top: -2px; }
.pick { height: 32px; align-items: stretch; justify-content: flex-start; }
.pick-lab { width: 221px; background: #ffde7a; display: flex; align-items: center; padding-bottom: 2px; box-sizing: border-box; color: #222; }
.pick-btn { width: 24px; height: 24px; margin: 4px 0 0 2px; background: #fff; border: 1px solid #aaa; box-sizing: border-box; display: flex; align-items: center; justify-content: center; }
.cs { width: 22px; height: 22px; display: block; }
.pick-split { width: 49px; margin-left: 2px; background: #ffde7a; display: flex; }
.csz { width: 31px; height: 32px; display: block; border-right: 1px solid #fff; flex: none; }
.pick-arrow { flex: 1; display: flex; align-items: center; justify-content: center; }
.tri-sm { border-left-width: 3px; border-right-width: 3px; border-top-width: 3px; }

.foot { display: flex; padding: 11px 0 0 192px; gap: 5px; }
.btn { box-sizing: border-box; width: 54px; height: 25px; font: 12px "Noto Sans CJK SC", "Liberation Sans", sans-serif; padding: 0; }
.ok { background: #71b3ca; color: #fff; border: 0; }
.cancel { background: #dcdcdc; color: #222; border: 1px solid #aaa; }
```
